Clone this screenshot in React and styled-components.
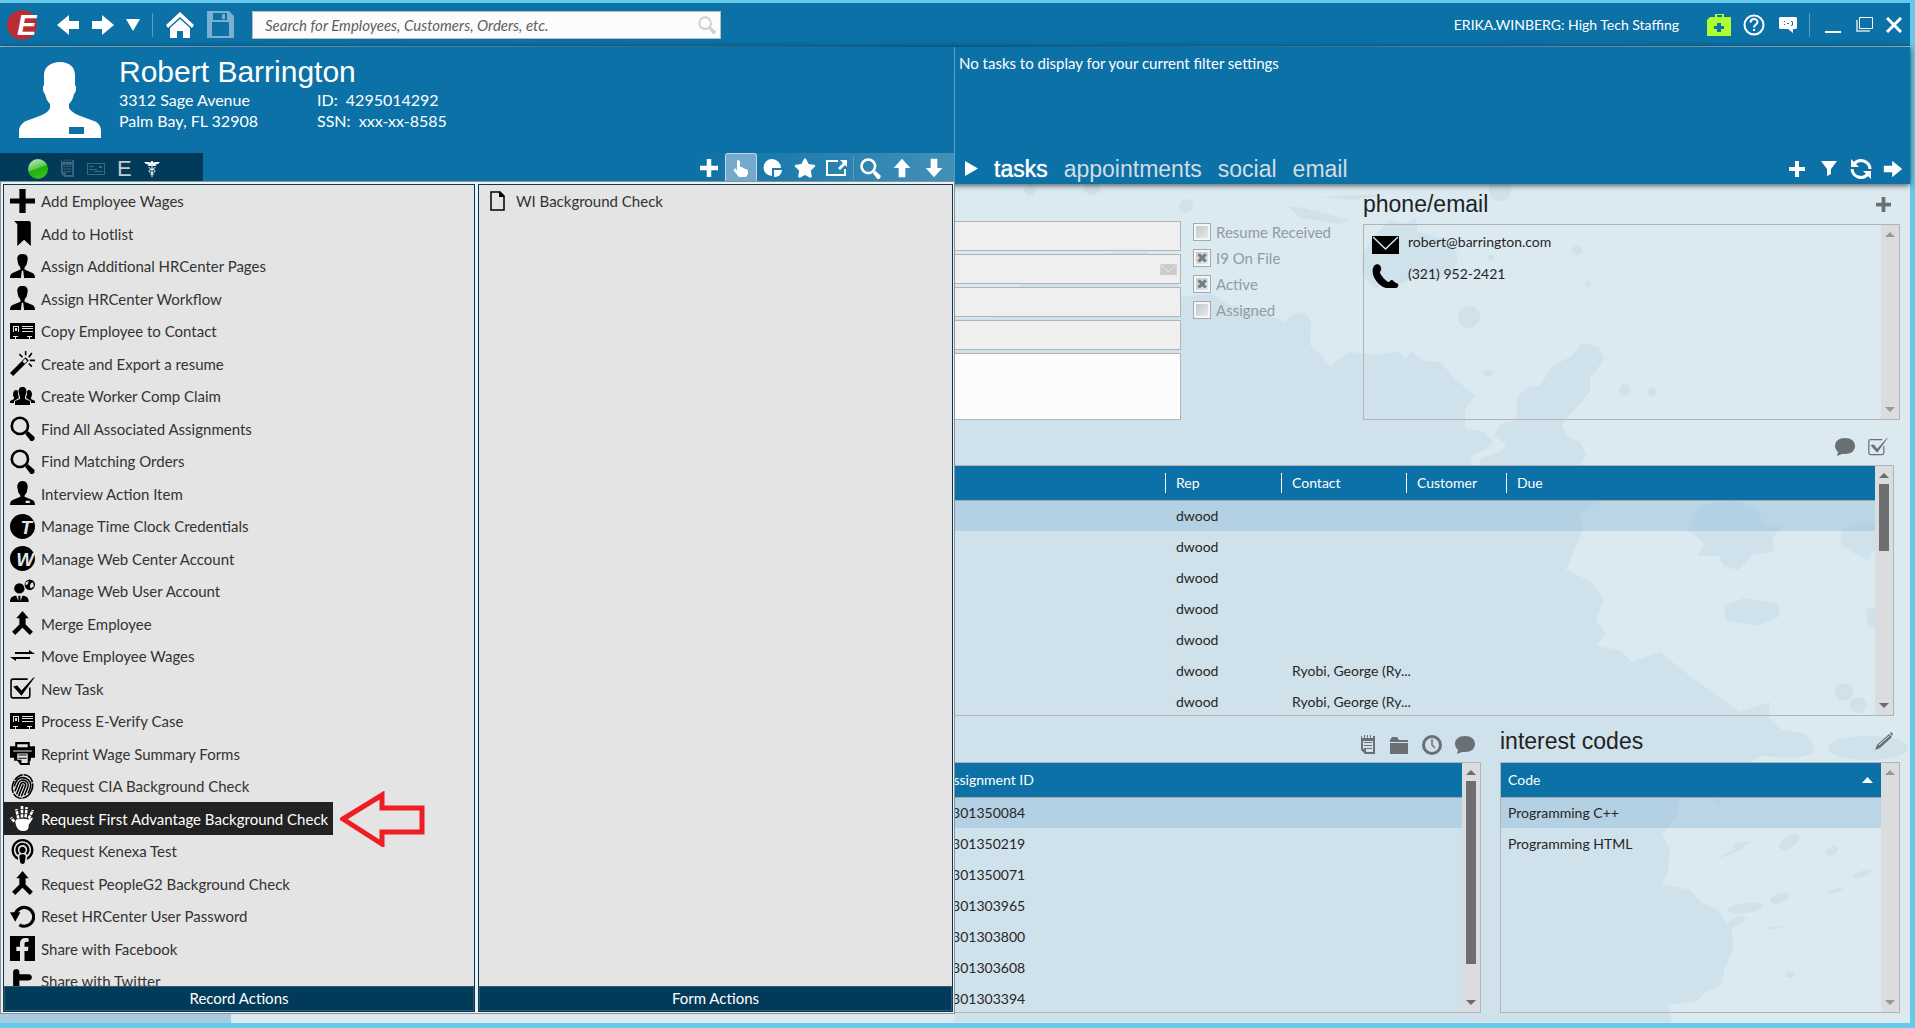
import React from 'react';
import styled, { createGlobalStyle, css } from 'styled-components';
import { FaFacebookF, FaPodcast, FaStar } from 'react-icons/fa';

const GlobalStyle = createGlobalStyle`
  * { box-sizing: border-box; }
  body {
    margin: 0;
    font-family: Lato, 'Liberation Sans', sans-serif;
    font-size: 14px;
    line-height: 20px;
    color: #262626;
  }
  button { font: inherit; color: inherit; background: none; border: 0; padding: 0; }
  ul { list-style: none; margin: 0; padding: 0; }
  h1, h2 { font-family: 'Liberation Sans', Arial, sans-serif; font-weight: 400; margin: 0; }
  svg { display: block; flex: none; }
`;

/* ---------- icons ---------- */

const Icon = ({ size = 24, w, h, box = '0 0 24 24', children }) => (
  <svg width={w || size} height={h || size} viewBox={box} fill="currentColor" aria-hidden="true">
    {children}
  </svg>
);

const ArrowLeft = () => (
  <Icon size={24}><path d="M1 12 13 2v6h10v8H13v6z" /></Icon>
);
const ArrowRight = ({ size = 24 }) => (
  <Icon size={size}><path d="M23 12 11 2v6H1v8h10v6z" /></Icon>
);
const ArrowUp = () => (
  <Icon size={20}><path d="M12 1 2 12h6v11h8V12h6z" /></Icon>
);
const ArrowDown = () => (
  <Icon size={20}><path d="M12 23 2 12h6V1h8v11h6z" /></Icon>
);
const Caret = () => (
  <Icon w={14} h={12} box="0 0 14 12"><path d="M0 0h14L7 12z" /></Icon>
);
const Plus = ({ size = 18 }) => (
  <Icon size={size}><path d="M9 0h6v9h9v6h-9v9H9v-9H0V9h9z" /></Icon>
);
const PlusThin = () => (
  <Icon size={25}><path d="M9 0h6v9h9v5h-9v9H9v-9H0V9h9z" /></Icon>
);
const Home = () => (
  <Icon w={28} h={28} box="0 0 28 28">
    <path d="M14 1 0 14l2 3L14 6l12 11 2-3z" />
    <path d="M14 8 4 17v10h7v-7h6v7h7V17z" />
  </Icon>
);
const Save = () => (
  <Icon w={27} h={27} box="0 0 27 27">
    <path fillRule="evenodd" d="M0 0h22l5 5v22H0zM6 2v7h14V2zm9 1h3v5h-3zM5 11v14h17V11z" />
  </Icon>
);
const Search = ({ size = 20, thick = 3 }) => (
  <Icon size={size}>
    <circle cx="9.500" cy="9.500" r="7.800" fill="none" stroke="currentColor" strokeWidth={thick} />
    <path d="m14.500 17 2.600-2.600 6.500 5.700-.2 2.500-1.500 1.400-2 .1z" />
  </Icon>
);
const Avatar = () => (
  <Icon w={82} h={76} box="0 0 82 76">
    <path
      fillRule="evenodd"
      d="M41 0c9 0 15 5 15 13v10c2 1 1 8-1 9-1 5-3 8-5 10v4c3 5 9 7 14 9l11 4c5 2 7 6 7 10v7H0v-7c0-4 3-8 7-10l11-4c5-2 11-4 13-9v-4c-3-3-4-6-5-10-2-1-3-8-1-9V13C25 5 32 0 41 0zM50 65v7h15v-7z"
    />
  </Icon>
);
const Notepad = ({ size = 20 }) => (
  <Icon w={size - 4} h={size} box="0 0 16 20">
    <path fillRule="evenodd" d="M1 1h1v2h2V0h1v3h2V0h1v3h2V0h1v3h2V1h2v18H5l-4-4zm2 5v8h3v3h7V6z" />
    <path d="M4 7h8v1H4zm0 3h8v1H4zm0 3h8v1H4z" />
  </Icon>
);
const Card = () => (
  <Icon w={18} h={12} box="0 0 18 12">
    <path fillRule="evenodd" d="M0 0h18v12H0zm1 1v10h16V1zm1 2h5v1H2zm10 0h3v2h-3zM2 6h8v1H2zm5 2h9v1H7z" />
  </Icon>
);
const Caduceus = () => (
  <Icon w={16} h={16} box="0 0 16 16">
    <circle cx="8" cy="1.500" r="1.500" />
    <path d="M0 1h5l3 2 3-2h5l-2 2h-3l2 1-2 1H9L8 4 7 5H5L3 4l2-1H2z" />
    <path fill="none" stroke="currentColor" d="M8 2v14M5 6c0 3 6 2 6 4s-5 2-4 4M11 6c0 3-6 2-6 4s5 2 4 4" />
  </Icon>
);
const Hand = () => (
  <Icon w={16} h={18} box="0 0 16 18">
    <path d="M5 0c1 0 2 1 2 2v5h2l1 1h1l1 1h1c1 0 2 1 2 3v2l-2 3H6L1 11c-1-2 1-3 2-2l1 2V2c0-1 0-2 1-2z" />
  </Icon>
);
const Pie = () => (
  <Icon size={20} box="0 0 20 20">
    <path d="M9 1a8.500 8.500 0 1 0 0 17v-8h9A9 9 0 0 0 9 1z" />
    <path d="M11 12h8a7 7 0 0 1-8 7z" />
  </Icon>
);
const Export = () => (
  <Icon w={22} h={18} box="0 0 22 18">
    <path fill="none" stroke="currentColor" strokeWidth="2" d="M12 2H1v14h18v-6" />
    <path d="M14 1h7v7l-2-2-5 5-2-2 5-5z" />
  </Icon>
);
const Filter = () => (
  <Icon w={16} h={15} box="0 0 16 15"><path d="M0 0h16L10 8v5l-4 2V8z" /></Icon>
);
const Refresh = () => (
  <Icon w={22} h={22} box="0 0 22 22">
    <path fill="none" stroke="currentColor" strokeWidth="3" d="M4 6a9 9 0 0 1 16 5M18 16A9 9 0 0 1 2 11" />
    <path d="M1 1v8h8zM21 21v-8h-8z" />
  </Icon>
);
const Medkit = () => (
  <Icon w={24} h={22} box="0 0 24 22">
    <path fillRule="evenodd" fill="#adff2f" d="M0 6l3-3h5V0h9v3h7v19H0zM10 1v2h5V1zm0 8v3H7v3h3v3h4v-3h3v-3h-3V9z" />
  </Icon>
);
const Help = () => (
  <Icon w={22} h={22} box="0 0 22 22">
    <circle cx="11" cy="11" r="9.500" fill="none" stroke="currentColor" strokeWidth="2" />
    <path fill="none" stroke="currentColor" strokeWidth="2" d="M7.500 8.500C7.500 4 14.500 4 14.500 8c0 2.500-3.500 2.500-3.500 5.500" />
    <path d="M10 15h2v2h-2z" />
  </Icon>
);
const Smile = () => (
  <Icon w={18} h={16} box="0 0 18 16">
    <path fillRule="evenodd" d="M1 0h16l1 1v10l-1 1h-3v4l-5-4H1l-1-1V1zM5 4v1h1V4zm0 3v1h1V7zm3-1v1h2V6zm4-2v1h1v3h-1v1h1l1-1V5l-1-1z" />
  </Icon>
);
const Restore = () => (
  <Icon w={17} h={15} box="0 0 17 15">
    <path fill="none" stroke="currentColor" d="M3.500.5h13v11h-13z" />
    <path fill="none" stroke="currentColor" strokeOpacity=".6" strokeWidth="2" d="M1 3v11h13" />
  </Icon>
);
const Close = () => (
  <Icon size={16} box="0 0 16 16">
    <path fill="none" stroke="currentColor" strokeWidth="3" d="m1 1 14 14M15 1 1 15" />
  </Icon>
);
const Envelope = ({ w = 27, h = 18, line = '#dbe9f1' }) => (
  <Icon w={w} h={h} box="0 0 27 18">
    <path d="M0 0h27v18H0z" />
    <path fill="none" stroke={line} strokeWidth="1.500" d="m1 1 12.500 12L26 1" />
  </Icon>
);
const Phone = () => (
  <Icon w={27} h={24} box="0 0 27 24">
    <path d="M2 2c2-3 7-2 7 2 1 2-1 3-1 5 2 4 5 7 8 9 2 0 2-2 4-2 1 0 2 2 4 3 2 0 3 2 2 3 0 2-2 2-4 2h-8C6 22-3 10 2 2z" />
  </Icon>
);
const Bubble = () => (
  <Icon w={20} h={18} box="0 0 20 18">
    <path d="M10 0c6 0 10 3 10 8s-4 8-10 8H7l-5 2 1-4C1 12 0 10 0 8c0-5 4-8 10-8z" />
  </Icon>
);
const CheckBoxIcon = ({ size = 25 }) => (
  <Icon size={size}>
    <path fill="none" stroke="currentColor" strokeWidth="1.500" d="M17 3H3Q1 3 1 5v14q0 2 2 2h14q2 0 2-2v-8" />
    <path d="m3 10 4-1 4 5L22 2l2-1-13 18z" />
  </Icon>
);
const Folder = () => (
  <Icon w={20} h={17} box="0 0 20 17">
    <path d="M1 3 3 0h5l2 3h9v2H1zM1 6h18v11H1z" />
  </Icon>
);
const Clock = () => (
  <Icon size={20} box="0 0 20 20">
    <circle cx="10" cy="10" r="8.500" fill="none" stroke="currentColor" strokeWidth="3" />
    <path fill="none" stroke="currentColor" strokeWidth="1.500" d="M10 4v6l3 3" />
  </Icon>
);
const Pencil = () => (
  <Icon size={20} box="0 0 20 20">
    <path d="m15 3 3 3L6 17l-5 2 2-5zM16 2l1-1 2 2-1 2z" />
    <path stroke="#d8e7ee" d="M5 14 15 5" />
  </Icon>
);
const Bookmark = () => (
  <Icon size={25}><path d="M4 0h14q2 0 2 2v22l-6.500-6L7 24V3z" /></Icon>
);
const Suit = () => (
  <Icon size={25}>
    <path fillRule="evenodd" d="M12 0c4 0 5 2 5 5l-1 5-2 3v2l7 3c2 1 3 2 3 5H0c0-3 1-4 3-5l7-3v-2L8 10 7 5c0-3 1-5 5-5zm-.7 16-.8 7h3l-.8-7z" />
  </Icon>
);
const Bust = () => (
  <Icon size={25}>
    <path fillRule="evenodd" d="M12 0c4 0 5 3 5 6l-1 5-2 3v1l7 3c2 1 3 2 3 5H0c0-3 1-4 3-5l7-3v-1l-2-3-1-5c0-3 1-6 5-6zm3 19v2h4v-2z" />
  </Icon>
);
const IdCard = () => (
  <Icon w={25} h={16} box="0 0 25 16">
    <path fillRule="evenodd" d="M0 0h25v16H0zM3 3v6h1V4h4v5h1V3zm9 0v1h11V3zm0 2v1h11V5zm0 3v1h11V8zM3 13v1h2v2h1v-2h2v-1zm14 0v1h2v2h1v-2h2v-1z" />
    <path fill="#e4e4e4" d="M5 5h2v3H5z" />
  </Icon>
);
const Wand = () => (
  <Icon size={25}>
    <path fillRule="evenodd" d="M0 21 15 6l3 3L3 24zM12 10l2 2 2.500-2.500-2-2z" />
    <path fill="none" stroke="currentColor" strokeWidth="1.500" d="m9 3 3 3M15 0v4M21 2l-3 4M19 9h5M18 12l3 3" />
  </Icon>
);
const People = () => (
  <Icon w={25} h={18} box="0 0 25 18">
    <path d="M12.500 0c3 0 4 2 4 5l-1.500 5v2l5 2v4H5v-4l5-2v-2L8.500 5c0-3 1-5 4-5z" />
    <path d="M6 3c2 0 2 1 2 4l1 4-5 3v2H0v-2l4-2v-1L3 8c0-3 1-5 3-5zM19 3c-2 0-2 1-2 4l-1 4 5 3v2h4v-2l-4-2v-1l1-3c0-3-1-5-3-5z" />
  </Icon>
);
const WebUser = () => (
  <Icon size={25}>
    <circle cx="9" cy="9" r="5" />
    <path d="M0 22c0-4 2-6 6-6l2 5v-5h2v5l2-5c4 0 6 2 6 6z" />
    <circle cx="19" cy="5.500" r="5.500" stroke="#e4e4e4" />
    <path fill="#e4e4e4" d="m15 3 3-1-1 3-2 1zM20 4l2-1 1 4-3 2-1-2z" />
  </Icon>
);
const Merge = () => (
  <Icon size={25}>
    <path d="m12 0 6 7h-3v6l7 7-3 3-7-7-7 7-3-3 7-7V7H6z" />
  </Icon>
);
const Swap = () => (
  <Icon w={25} h={12} box="0 0 25 12">
    <path d="M5 2h14V0l6 4H5zM20 9H6v2L0 7h20z" />
  </Icon>
);
const Printer = () => (
  <Icon size={25}>
    <path fillRule="evenodd" d="M5 1h14v4h5v11h-4v3h-1v4h-9l-3-4H4v-3H0V5h5zm2 2v3h10V3zM3 9v1h18V9zm4 3v6h4v3h6v-9z" />
    <path d="M8 13h8v1H8zm0 3h8v1H8z" />
  </Icon>
);
const BadgeLetter = ({ x, children }) => (
  <Icon size={25}>
    <circle cx="12" cy="12" r="12" />
    <text x={x} y="19" fill="#e4e4e4" fontFamily="Liberation Sans" fontWeight="700" fontStyle="italic" fontSize="18">
      {children}
    </text>
  </Icon>
);
const Fingerprint = () => (
  <Icon size={25}>
    <g fill="none" stroke="currentColor" strokeWidth="1.500" transform="rotate(22 12 12)">
      <ellipse cx="12" cy="12" rx="9.500" ry="11.500" strokeDasharray="12 1 9 1" />
      <path d="M4.500 15V11c0-10 15-10 15 0v5M7 19V11c0-7 10-7 10 0v8M9.500 21V11c0-4 5-4 5 0v10M12 10v12" />
    </g>
  </Icon>
);
const HandPrint = () => (
  <Icon size={25}>
    <path d="M6 13c3-1 9-1 12 0l3-2 1 1-4 6c0 4-1 6-5 6-5 0-7-3-8-9z" />
    <path
      fill="none"
      stroke="currentColor"
      strokeWidth="2.500"
      strokeDasharray="3.200 .8"
      d="m8 12-2-9M11.500 11V0M15 11l1-10M18 12l4-8M4 15l-3-4"
    />
  </Icon>
);
const Reset = () => (
  <Icon size={25}>
    <path fill="none" stroke="currentColor" strokeWidth="3" d="M5 10a9 9 0 1 1 4 10" />
    <path d="M0 8h10l-5 9z" />
  </Icon>
);
const Twitter = () => (
  <Icon size={25}>
    <path d="M3 3c0-4 6-4 6 0v2h9c4 0 4 6 0 6H9v4c0 3 2 3 4 3h5c4 0 4 6 0 6h-6c-6 0-9-3-9-9z" />
  </Icon>
);
const Page = () => (
  <Icon w={15} h={20} box="0 0 15 20">
    <path fill="none" stroke="currentColor" strokeWidth="1.500" d="M1 1h9l4 4v14H1z" />
    <path d="M9 0v6h6z" />
  </Icon>
);

const FbBox = styled.span`
  display: flex;
  justify-content: flex-end;
  align-items: flex-end;
  width: 25px;
  height: 25px;
  padding-right: 1px;
  background: #000;
  color: #e4e4e4;
`;
const Facebook = () => <FbBox><FaFacebookF size={23} /></FbBox>;

/* ---------- window frame ---------- */

const Window = styled.div`
  display: flex;
  flex-direction: column;
  min-height: 100vh;
  min-width: 1500px;
  border: solid #66c9ea;
  border-width: 3px 5px 5px 0;
  background: #dbe9f1;
`;

const TitleBar = styled.header`
  display: flex;
  align-items: center;
  height: 43px;
  padding-left: 6px;
  background: #0c71a6;
  color: #fff;
`;

const Hairline = styled.div`
  height: 1px;
  background: linear-gradient(90deg, #b5d3e3, #0c71a6 50%, #b5d3e3), #0c71a6;
`;

const BarButton = styled.button`
  display: flex;
  align-items: center;
  justify-content: center;
  width: ${(p) => p.$w || 35}px;
  height: 36px;
  opacity: ${(p) => (p.disabled ? 0.45 : 1)};
  color: #fff;
`;

const BackForward = styled.div`
  display: flex;
  align-items: center;
  gap: 11px;
  padding: 0 12px 0 17px;
`;

const Separator = styled.span`
  width: 1px;
  height: 24px;
  margin: 0 ${(p) => p.$gap || 0}px;
  background: #5b9dc2;
`;

const SearchBox = styled.label`
  display: flex;
  align-items: center;
  width: 469px;
  height: 28px;
  margin-left: 19px;
  padding: 0 4px 0 12px;
  border: 1px solid #b9bcbe;
  background: #fcfcfc;
  color: #d0d0d0;

  input {
    flex: 1;
    min-width: 0;
    border: 0;
    padding: 0;
    outline: 0;
    background: none;
    font: italic 15px/20px Lato, sans-serif;
    color: #444;
  }
  input::placeholder { color: #5f5f5f; }
`;

const UserName = styled.span`
  margin-left: auto;
  margin-right: 22px;
`;

const Minimize = styled.span`
  width: 16px;
  height: 2px;
  margin-top: 14px;
  background: #fff;
`;

/* ---------- record header ---------- */

const HeaderRow = styled.section`
  display: grid;
  grid-template-columns: 1fr 1fr;
  height: 137px;
  position: relative;
  z-index: 1;
  background: #0c71a6;
  color: #fff;
  box-shadow: 0 1px 6px rgba(0, 0, 0, 0.7);
`;

const RecordSide = styled.div`
  display: flex;
  flex-direction: column;
  border-right: 1px solid #5b9dc2;
`;

const Person = styled.div`
  display: flex;
  gap: 18px;
  height: 106px;
  padding: 15px 0 0 19px;
`;

const PersonName = styled.h1`
  margin-top: -7px;
  font-size: 30px;
  line-height: 34px;
`;

const PersonFacts = styled.div`
  display: grid;
  grid-template-columns: 198px auto;
  font-size: 16px;
  line-height: 21px;
`;

const StripRow = styled.div`
  display: flex;
  justify-content: space-between;
  height: 31px;
`;

const StatusStrip = styled.div`
  display: flex;
  align-items: center;
  gap: 12px;
  width: 203px;
  padding-left: 28px;
  background: #023a59;
  color: #3d6880;
`;

const GreenBall = styled.span`
  width: 20px;
  height: 20px;
  border-radius: 50%;
  background: linear-gradient(160deg, #b4e6ae 10%, #5cc94f 45%, #21b00e 50%, #38c425);
`;

const EFlag = styled.span`
  font: 22px/24px 'Liberation Sans', sans-serif;
  color: #c9c9c9;
`;

const Light = styled.span`
  color: #fff;
`;

const ActionStrip = styled.div`
  display: flex;
  align-items: center;
  padding: 0 4px 1px 30px;
  background: linear-gradient(90deg, transparent 10%, rgba(255, 255, 255, 0.22));
`;

const StripButton = styled.button`
  display: flex;
  align-items: center;
  justify-content: center;
  width: 32px;
  height: 30px;
  color: #fff;
  ${(p) => p.$active && css`
    border: 1px solid #bcd8e8;
    border-bottom: 0;
    border-radius: 3px 3px 0 0;
    background: #75a9cb;
  `}
`;

const TaskSide = styled.div`
  display: flex;
  flex-direction: column;
  justify-content: space-between;
  padding: 6px 0 0 4px;
  font-size: 15px;
`;

const TabBar = styled.nav`
  display: flex;
  align-items: center;
  gap: 16px;
  height: 31px;
  padding: 0 1px 0 6px;
`;

const Tab = styled.button`
  font: 23px/26px 'Liberation Sans', Arial, sans-serif;
  color: ${(p) => (p.$on ? '#fff' : '#d2dde3')};
  text-shadow: ${(p) => (p.$on ? '0 0 1px #fff' : 'none')};
`;

const TabActions = styled.div`
  display: flex;
  margin-left: auto;
`;

/* ---------- menu over the page ---------- */

const Body = styled.main`
  position: relative;
  display: flex;
  flex: 1;
`;

const Menu = styled.div`
  position: absolute;
  z-index: 2;
  top: -3px;
  bottom: 9px;
  left: 0;
  width: 50%;
  display: grid;
  grid-template-columns: 472px 1fr;
  gap: 3px;
  padding: 2px 1px 1px 2px;
  border: 1px solid #8f8f8f;
  background: #eef0f1;
`;

const MenuPane = styled.section`
  display: flex;
  flex-direction: column;
  min-height: 0;
  border: 1px solid #023a59;
  background: #e4e4e4;
`;

const MenuList = styled.ul`
  flex: 1;
  min-height: 0;
  overflow: hidden;
  font-size: 15px;
`;

const MenuItem = styled.li`
  position: relative;
  display: flex;
  width: max-content;
  height: 32px;
  &:nth-child(even) { height: 33px; }
`;

const MenuButton = styled.button`
  display: flex;
  align-items: center;
  padding: 0 5px 0 6px;
  white-space: nowrap;
  background: ${(p) => (p.$on ? '#222' : 'none')};
  color: ${(p) => (p.$on ? '#fff' : '#333')};
`;

const MenuIcon = styled.span`
  display: flex;
  justify-content: center;
  width: 25px;
  margin-right: 6px;
  color: ${(p) => (p.$on ? '#fff' : '#000')};
`;

const MenuTitle = styled.h2`
  height: 25px;
  border: 1px solid #2d5b75;
  background: #023a59;
  font: 15px/23px Lato, sans-serif;
  color: #fff;
  text-align: center;
`;

const Pointer = styled.svg`
  position: absolute;
  left: calc(100% + 7px);
  top: -11px;
`;

/* ---------- page below ---------- */

const Splatter = styled.svg`
  position: absolute;
  right: 0;
  top: 0;
`;

const SideNav = styled.aside`
  width: 231px;
  background: #a6cbdf;
`;

const Content = styled.div`
  position: relative;
  flex: 1;
  min-width: 0;
`;

const DetailRow = styled.div`
  display: grid;
  grid-template-columns: 1fr 170px 537px;
  padding-right: 10px;
  gap: 0 6px;
`;

const Fields = styled.div`
  display: flex;
  flex-direction: column;
  gap: 3px;
  padding-top: 37px;
`;

const Field = styled.label`
  display: flex;
  align-items: center;
  height: 30px;
  padding-right: 3px;
  border: 1px solid #b3b3b3;
  background: #efefef;
  color: #cbcbcb;

  input { flex: 1; min-width: 0; border: 0; background: none; }
`;

const Notes = styled.textarea`
  flex: 1;
  border: 1px solid #b3b3b3;
  background: #fcfcfc;
  resize: none;
`;

const Checks = styled.div`
  display: flex;
  flex-direction: column;
  gap: 8px;
  padding: 39px 0 0 6px;
`;

const Check = styled.label`
  display: flex;
  align-items: center;
  gap: 5px;
  height: 18px;
  font-size: 15px;
  color: #919ca2;
  white-space: nowrap;

  input {
    appearance: none;
    display: flex;
    align-items: center;
    justify-content: center;
    width: 18px;
    height: 18px;
    margin: 0;
    border: 1px solid #a4a9ac;
    background: linear-gradient(135deg, #c4cacd, #e4e9ec) content-box, #f4f6f7;
    padding: 2px;
  }
  input:checked::after {
    content: '✖';
    font: 14px/14px 'DejaVu Sans', sans-serif;
    color: #777c80;
  }
`;

const Heading = styled.div`
  display: flex;
  align-items: center;
  justify-content: space-between;
  height: ${(p) => p.$h}px;
  padding: ${(p) => p.$pad || '0'};
  color: #6a7074;

  h2 { font-size: 23px; line-height: 26px; color: #222; }
`;

const Tools = styled.div`
  display: flex;
  align-items: center;
  gap: 13px;
  margin-left: auto;
  button { display: flex; color: #6a7074; }
`;

const Panel = styled.div`
  display: flex;
  height: ${(p) => p.$h || 251}px;
  border: 1px solid #b3b3b3;
`;

const PanelBody = styled.div`
  flex: 1;
  min-width: 0;
  overflow: hidden;
`;

const ContactList = styled.ul`
  padding: 1px 8px;
  li { display: flex; gap: 9px; height: 32px; padding-top: 6px; color: #000; }
  li svg { margin-top: 4px; }
  li + li svg { margin-top: 0; }
  a { color: #262626; text-decoration: none; }
`;

const Table = styled.table`
  width: 100%;
  table-layout: fixed;
  border-collapse: collapse;

  th, td { padding: 0; text-align: left; font-weight: 400; }
  thead { background: #0c71a6; color: #fff; border-bottom: 1px solid #a5a9ac; }
  th { height: 34px; }
  td {
    height: 31px;
    padding-left: ${(p) => p.$pad || 11}px;
    white-space: nowrap;
  }
  tbody tr:first-child { background: rgba(140, 188, 214, 0.42); }
`;

const HeadCell = styled.span`
  display: flex;
  align-items: center;
  justify-content: space-between;
  padding: 0 8px 0 ${(p) => p.$pad || 10}px;
  border-left: ${(p) => (p.$line ? '1px solid #fff' : '0')};
`;

const Bar = styled.div`
  display: flex;
  flex-direction: column;
  align-items: center;
  width: 18px;
  padding: 7px 0;
  background: #dadcdf;
  color: ${(p) => (p.$off ? '#97999b' : '#6a6b6d')};
`;

const Thumb = styled.div`
  width: 10px;
  height: ${(p) => p.$h}px;
  margin-top: 6px;
  background: #6d6e70;
`;

const BarEnd = styled.span`
  margin-top: auto;
`;

const LowerRow = styled.div`
  display: grid;
  grid-template-columns: 1fr 400px;
  gap: 19px;
  padding: 0 10px 10px 0;
`;

const TaskPanel = styled.div`
  padding-right: 16px;
`;

const Scroll = ({ thumb }) => (
  <Bar $off={!thumb}>
    <Icon w={10} h={5} box="0 0 10 5"><path d="M5 0 10 5H0z" /></Icon>
    {thumb && <Thumb $h={thumb} />}
    <BarEnd><Icon w={10} h={5} box="0 0 10 5"><path d="M0 0h10L5 5z" /></Icon></BarEnd>
  </Bar>
);

const recordActions = [
  ['Add Employee Wages', PlusThin],
  ['Add to Hotlist', Bookmark],
  ['Assign Additional HRCenter Pages', Suit],
  ['Assign HRCenter Workflow', Suit],
  ['Copy Employee to Contact', IdCard],
  ['Create and Export a resume', Wand],
  ['Create Worker Comp Claim', People],
  ['Find All Associated Assignments', () => <Search size={25} thick={2.5} />],
  ['Find Matching Orders', () => <Search size={25} thick={2.5} />],
  ['Interview Action Item', Bust],
  ['Manage Time Clock Credentials', () => <BadgeLetter x="10">T</BadgeLetter>],
  ['Manage Web Center Account', () => <BadgeLetter x="6">W</BadgeLetter>],
  ['Manage Web User Account', WebUser],
  ['Merge Employee', Merge],
  ['Move Employee Wages', Swap],
  ['New Task', CheckBoxIcon],
  ['Process E-Verify Case', IdCard],
  ['Reprint Wage Summary Forms', Printer],
  ['Request CIA Background Check', Fingerprint],
  ['Request First Advantage Background Check', HandPrint],
  ['Request Kenexa Test', () => <FaPodcast size={25} />],
  ['Request PeopleG2 Background Check', Merge],
  ['Reset HRCenter User Password', Reset],
  ['Share with Facebook', Facebook],
  ['Share with Twitter', Twitter],
];
const activeAction = 'Request First Advantage Background Check';

const checks = [
  ['Resume Received', false],
  ['I9 On File', true],
  ['Active', true],
  ['Assigned', false],
];

const taskRows = ['', '', '', '', '', 'Ryobi, George (Ry...', 'Ryobi, George (Ry...'];
const assignments = [
  '4301350084', '4301350219', '4301350071', '4301303965', '4301303800', '4301303608', '4301303394',
];

const TopBar = () => (
  <TitleBar>
    <svg width="33" height="32" viewBox="0 0 33 32" aria-label="Home">
      <circle cx="16" cy="16" r="15" fill="#b92d33" />
      <text x="11" y="26" fill="#fff" fontFamily="Liberation Sans" fontWeight="700" fontStyle="italic" fontSize="29">E</text>
    </svg>
    <BackForward>
      <BarButton $w={24} aria-label="Back"><ArrowLeft /></BarButton>
      <BarButton $w={24} aria-label="Forward"><ArrowRight /></BarButton>
      <BarButton $w={14} aria-label="History"><Caret /></BarButton>
    </BackForward>
    <Separator />
    <BarButton $w={54} aria-label="Home"><Home /></BarButton>
    <BarButton $w={26} disabled aria-label="Save"><Save /></BarButton>
    <SearchBox>
      <input type="text" placeholder="Search for Employees, Customers, Orders, etc." aria-label="Search" />
      <Search size={18} thick={2.5} />
    </SearchBox>
    <UserName>ERIKA.WINBERG: High Tech Staffing</UserName>
    <BarButton aria-label="Support"><Medkit /></BarButton>
    <BarButton aria-label="Help"><Help /></BarButton>
    <BarButton $w={33} aria-label="Feedback"><Smile /></BarButton>
    <Separator $gap={5} />
    <BarButton aria-label="Minimize"><Minimize /></BarButton>
    <BarButton $w={28} aria-label="Restore"><Restore /></BarButton>
    <BarButton $w={32} aria-label="Close"><Close /></BarButton>
  </TitleBar>
);

const RecordHeader = () => (
  <HeaderRow>
    <RecordSide>
      <Person>
        <Avatar />
        <div>
          <PersonName>Robert Barrington</PersonName>
          <PersonFacts>
            <span>3312 Sage Avenue</span>
            <span>ID:&nbsp; 4295014292</span>
            <span>Palm Bay, FL 32908</span>
            <span>SSN:&nbsp; xxx-xx-8585</span>
          </PersonFacts>
        </div>
      </Person>
      <StripRow>
        <StatusStrip>
          <GreenBall />
          <Notepad size={19} />
          <Card />
          <EFlag>E</EFlag>
          <Light><Caduceus /></Light>
        </StatusStrip>
        <ActionStrip>
          <StripButton aria-label="Add"><Plus /></StripButton>
          <StripButton $active aria-label="Actions"><Hand /></StripButton>
          <StripButton aria-label="Reports"><Pie /></StripButton>
          <StripButton aria-label="Favorite"><FaStar size={22} /></StripButton>
          <StripButton aria-label="Open"><Export /></StripButton>
          <Separator />
          <StripButton aria-label="Find"><Search size={21} /></StripButton>
          <StripButton aria-label="Previous"><ArrowUp /></StripButton>
          <StripButton aria-label="Next"><ArrowDown /></StripButton>
        </ActionStrip>
      </StripRow>
    </RecordSide>
    <TaskSide>
      <div>No tasks to display for your current filter settings</div>
      <TabBar>
        <Icon w={13} h={15} box="0 0 13 15"><path d="M0 0l13 7.500L0 15z" /></Icon>
        <Tab $on>tasks</Tab>
        <Tab>appointments</Tab>
        <Tab>social</Tab>
        <Tab>email</Tab>
        <TabActions>
          <StripButton aria-label="Add task"><Plus size={16} /></StripButton>
          <StripButton aria-label="Filter"><Filter /></StripButton>
          <StripButton aria-label="Refresh"><Refresh /></StripButton>
          <StripButton aria-label="Go"><ArrowRight size={20} /></StripButton>
        </TabActions>
      </TabBar>
    </TaskSide>
  </HeaderRow>
);

const ActionMenu = () => (
  <Menu>
    <MenuPane>
      <MenuList>
        {recordActions.map(([label, Glyph]) => {
          const on = label === activeAction;
          return (
            <MenuItem key={label}>
              <MenuButton $on={on}>
                <MenuIcon $on={on}><Glyph /></MenuIcon>
                {label}
              </MenuButton>
              {on && (
                <Pointer width="86" height="56" viewBox="0 0 86 56">
                  <path d="M3 28 42 4v13h40v24H42v12z" fill="none" stroke="#ee1c24" strokeWidth="5" />
                </Pointer>
              )}
            </MenuItem>
          );
        })}
      </MenuList>
      <MenuTitle>Record Actions</MenuTitle>
    </MenuPane>
    <MenuPane>
      <MenuList>
        <MenuItem>
          <MenuButton>
            <MenuIcon><Page /></MenuIcon>
            WI Background Check
          </MenuButton>
        </MenuItem>
      </MenuList>
      <MenuTitle>Form Actions</MenuTitle>
    </MenuPane>
  </Menu>
);

const Backdrop = () => (
  <Splatter width="956" height="838" viewBox="954 184 956 838" fill="#cfe1ea" aria-hidden="true">
    <path d="M954 318H990L1030 275 1060 262 1114 252 1147 252 1155 268 1176 274 1180 297 1210 293 1230 305 1262 312 1285 322 1292 314 1304 312 1311 322 1310 345 1322 356 1330 366 1350 352 1376 355 1400 352 1405 358 1412 352 1425 361 1440 362 1456 380 1475 395 1465 410 1465 428 1485 432 1493 442 1486 450 1472 455 1470 466 1478 466 1482 458 1500 452 1506 444 1494 436 1500 424 1516 420 1518 396 1528 387 1540 386 1552 366 1572 356 1582 343 1598 346 1604 358 1598 368 1590 378 1590 392 1562 424 1566 436 1580 442 1586 454 1580 466 1604 500 1580 512 1582 532 1566 570 1592 582 1604 600 1596 620 1606 634 1596 646 1620 650 1632 662 1660 652 1690 676 1740 712 1770 702 1768 718 1782 730 1806 734 1815 746 1812 754 1796 758 1762 756 1750 762 1700 778 1680 798 1676 818 1662 834 1670 850 1668 872 1662 884 1690 890 1700 902 1718 910 1732 930 1733 950 1724 970 1722 984 1706 992 1696 1002 1668 1004 1672 1022H954Z" />
    <path d="M1362 262c4-18 14-28 20-34l8-8 14 4 12-6 2 14 30 8 10 16-4 18-22 6-16-4-14 8-18-2-8 6-14-14zM1320 197l36-2h26l-30 5zM1288 206l16 2 46 12-10 4-40-6z" />
    <path d="M1700 506l34-6 24 10 4 14 20 2-10 12 2 14-20 2-16 16-14-4-6-10-20 0 6-14-16-12zM1842 530l26-8 20 12 2 14-16 2-6 10-16-8-12-8zM1724 606l20-8 34 6 2 12-24 10-30-6zM1866 610l14-6 12 12-8 16-16-6z" />
    <g>
      <circle cx="1500" cy="190" r="11" /><circle cx="1469" cy="317" r="11" /><circle cx="1577" cy="250" r="5" />
      <circle cx="1491" cy="258" r="3" /><circle cx="1588" cy="284" r="3" /><circle cx="1488" cy="373" r="4" />
      <circle cx="1625" cy="390" r="6" /><circle cx="1652" cy="392" r="4" /><circle cx="1186" cy="206" r="7" />
      <circle cx="1092" cy="187" r="8" /><circle cx="1030" cy="190" r="6" /><circle cx="1844" cy="692" r="9" />
      <circle cx="1858" cy="705" r="8" />
    </g>
    <g>
      <ellipse cx="1868" cy="748" rx="40" ry="12" />
      <ellipse cx="1789" cy="842" rx="11" ry="6" transform="rotate(-35 1789 842)" />
      <ellipse cx="1832" cy="851" rx="7" ry="4" transform="rotate(-30 1832 851)" />
      <ellipse cx="1862" cy="874" rx="10" ry="3" transform="rotate(-20 1862 874)" />
      <ellipse cx="1780" cy="898" rx="10" ry="5" transform="rotate(-20 1780 898)" />
      <ellipse cx="1745" cy="908" rx="18" ry="5" transform="rotate(-8 1745 908)" />
      <ellipse cx="1736" cy="922" rx="10" ry="4" transform="rotate(-30 1736 922)" />
      <ellipse cx="1835" cy="891" rx="8" ry="2" transform="rotate(-20 1835 891)" />
      <ellipse cx="1790" cy="975" rx="5" ry="3" />
      <path d="M1715 860l20-12-2-4 18-3-12 10zM1710 797l10 10-2-10zM1768 930l18-4-16 1z" />
    </g>
  </Splatter>
);

const App = () => (
  <>
    <GlobalStyle />
    <Window>
      <TopBar />
      <Hairline />
      <RecordHeader />
      <Body>
        <Backdrop />
        <SideNav />
        <Content>
          <DetailRow>
            <Fields>
              <Field><input type="text" aria-label="Name" disabled /></Field>
              <Field>
                <input type="email" aria-label="Email" disabled />
                <Envelope w={17} h={11} line="#efefef" />
              </Field>
              <Field><input type="text" aria-label="Phone" disabled /></Field>
              <Field><input type="text" aria-label="Address" disabled /></Field>
              <Notes aria-label="Notes" />
            </Fields>
            <Checks>
              {checks.map(([label, on]) => (
                <Check key={label}>
                  <input type="checkbox" defaultChecked={on} disabled />
                  {label}
                </Check>
              ))}
            </Checks>
            <div>
              <Heading $h={40} $pad="0 9px 0 0">
                <h2>phone/email</h2>
                <Tools><button aria-label="Add contact method"><Plus size={15} /></button></Tools>
              </Heading>
              <Panel $h={196}>
                <PanelBody>
                  <ContactList>
                    <li><Envelope /><a href="mailto:robert@barrington.com">robert@barrington.com</a></li>
                    <li><Phone /><a href="tel:3219522421">(321) 952-2421</a></li>
                  </ContactList>
                </PanelBody>
                <Scroll />
              </Panel>
            </div>
          </DetailRow>

          <TaskPanel>
            <Heading $h={45} $pad="8px 6px 0 0">
              <Tools>
                <button aria-label="Messages"><Bubble /></button>
                <button aria-label="New task"><CheckBoxIcon size={20} /></button>
              </Tools>
            </Heading>
            <Panel>
              <PanelBody>
                <Table>
                  <colgroup>
                    <col />
                    <col width="116" />
                    <col width="125" />
                    <col width="100" />
                    <col width="369" />
                  </colgroup>
                  <thead>
                    <tr>
                      <th aria-label="Action" />
                      {['Rep', 'Contact', 'Customer', 'Due'].map((t) => (
                        <th key={t}><HeadCell $line>{t}</HeadCell></th>
                      ))}
                    </tr>
                  </thead>
                  <tbody>
                    {taskRows.map((contact, i) => (
                      <tr key={i}>
                        <td />
                        <td>dwood</td>
                        <td>{contact}</td>
                        <td />
                        <td />
                      </tr>
                    ))}
                  </tbody>
                </Table>
              </PanelBody>
              <Scroll thumb={67} />
            </Panel>
          </TaskPanel>

          <LowerRow>
            <div>
              <Heading $h={46} $pad="12px 6px 0 0">
                <Tools>
                  <button aria-label="Notes"><Notepad size={20} /></button>
                  <button aria-label="Files"><Folder /></button>
                  <button aria-label="History"><Clock /></button>
                  <button aria-label="Messages"><Bubble /></button>
                </Tools>
              </Heading>
              <Panel>
                <PanelBody>
                  <Table>
                    <colgroup>
                      <col />
                      <col width="529" />
                    </colgroup>
                    <thead>
                      <tr>
                        <th aria-label="Customer" />
                        <th><HeadCell $line>Assignment ID</HeadCell></th>
                      </tr>
                    </thead>
                    <tbody>
                      {assignments.map((id) => (
                        <tr key={id}><td /><td>{id}</td></tr>
                      ))}
                    </tbody>
                  </Table>
                </PanelBody>
                <Scroll thumb={183} />
              </Panel>
            </div>
            <div>
              <Heading $h={46} $pad="4px 6px 0 0">
                <h2>interest codes</h2>
                <Tools><button aria-label="Edit"><Pencil /></button></Tools>
              </Heading>
              <Panel>
                <PanelBody>
                  <Table $pad={7}>
                    <thead>
                      <tr>
                        <th>
                          <HeadCell $pad={7}>
                            Code
                            <Icon w={11} h={6} box="0 0 11 6"><path d="M5.500 0 11 6H0z" /></Icon>
                          </HeadCell>
                        </th>
                      </tr>
                    </thead>
                    <tbody>
                      <tr><td>Programming C++</td></tr>
                      <tr><td>Programming HTML</td></tr>
                    </tbody>
                  </Table>
                </PanelBody>
                <Scroll />
              </Panel>
            </div>
          </LowerRow>
        </Content>
        <ActionMenu />
      </Body>
    </Window>
  </>
);

export default App;
